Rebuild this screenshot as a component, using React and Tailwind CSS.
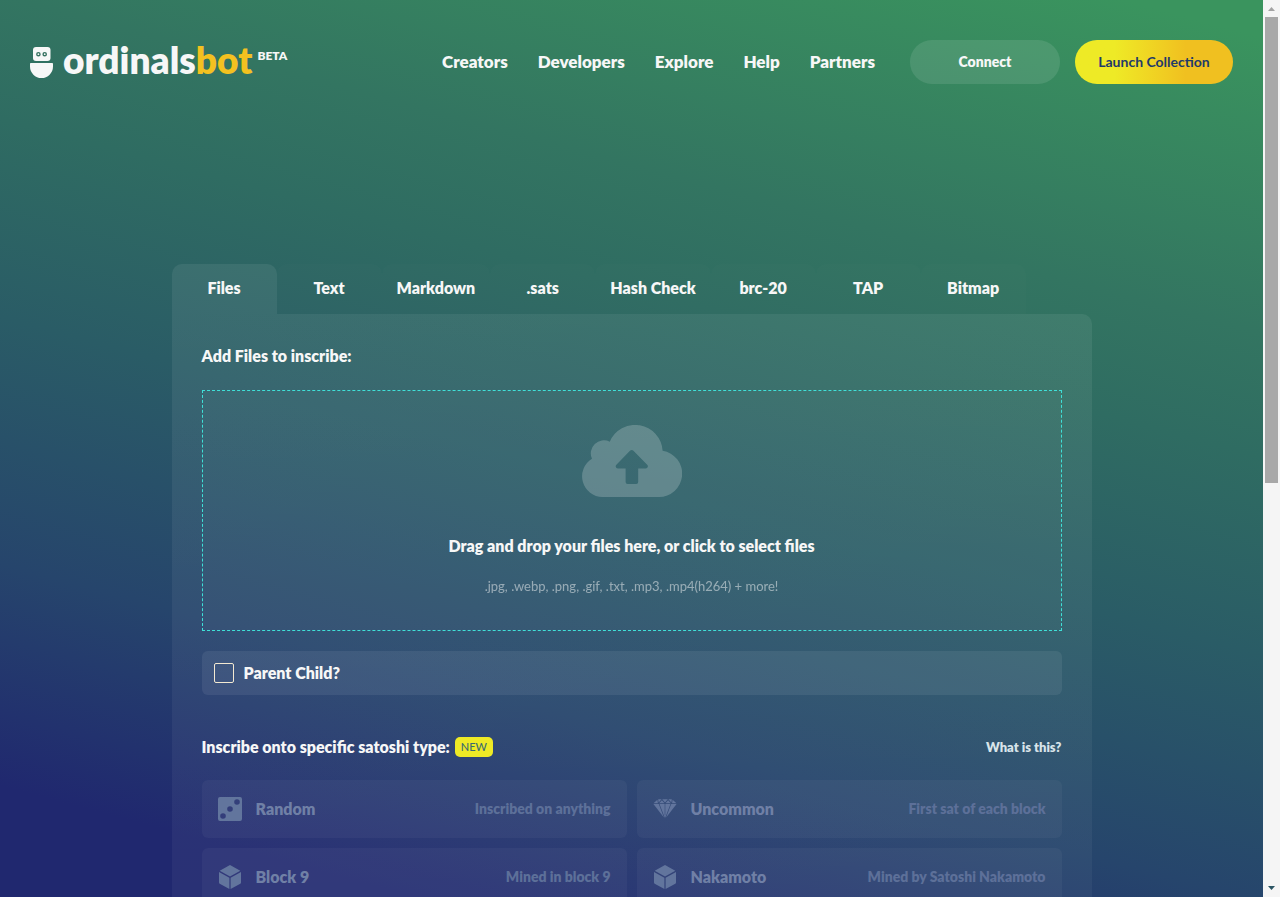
import React, { useState } from 'react';

const navLinks = ['Creators', 'Developers', 'Explore', 'Help', 'Partners'];

const tabs = ['Files', 'Text', 'Markdown', '.sats', 'Hash Check', 'brc-20', 'TAP', 'Bitmap'];

const satTypes = [
  { id: 'random', name: 'Random', description: 'Inscribed on anything', icon: 'dice' },
  { id: 'uncommon', name: 'Uncommon', description: 'First sat of each block', icon: 'gem' },
  { id: 'block9', name: 'Block 9', description: 'Mined in block 9', icon: 'cube' },
  { id: 'nakamoto', name: 'Nakamoto', description: 'Mined by Satoshi Nakamoto', icon: 'cube' }
];

const RobotIcon = () => (
  <svg width="23" height="31" viewBox="0 0 23 31" fill="none" aria-hidden="true">
    <rect x="3" y="0" width="17.5" height="14" rx="3" fill="#f7f7f7" />
    <circle cx="8.4" cy="7.2" r="1.6" stroke="#35705f" strokeWidth="1.4" />
    <circle cx="14.7" cy="7.2" r="1.6" stroke="#35705f" strokeWidth="1.4" />
    <path d="M0.8 16h21.4a.8.8 0 0 1 .8.8v2.7a11.5 11.5 0 0 1-23 0v-2.7a.8.8 0 0 1 .8-.8z" fill="#f7f7f7" />
  </svg>
);

const CloudIcon = () => (
  <svg width="100" height="72" viewBox="0 0 100 72" aria-hidden="true">
    <mask id="cloud-arrow">
      <rect width="100" height="72" fill="white" />
      <path
        d="M48.2 25.6a2.2 2.2 0 0 1 3 0l14 14.2c1.4 1.5.6 3.6-1.4 3.6H56.2V57a2 2 0 0 1-2 2h-8.6a2 2 0 0 1-2-2V43.4h-7.8c-2 0-2.8-2.1-1.4-3.6z"
        fill="black"
      />
    </mask>
    <g mask="url(#cloud-arrow)" fill="white" opacity="0.2">
      <path d="M20.5 72A20.6 20.6 0 0 1 10 33.8A13 13 0 0 1 27.8 16.8A27.5 27.5 0 0 1 80.6 25.7A23.3 23.3 0 0 1 76.7 72z" />
    </g>
  </svg>
);

const DiceIcon = () => (
  <svg width="24" height="24" viewBox="0 0 24 24" fill="currentColor" aria-hidden="true">
    <path
      fillRule="evenodd"
      d="M2 0h20a2 2 0 0 1 2 2v20a2 2 0 0 1-2 2H2a2 2 0 0 1-2-2V2a2 2 0 0 1 2-2zM19 2.200a2.800 2.800 0 1 0 0 5.600a2.800 2.800 0 0 0 0-5.600zM12 9.200a2.800 2.800 0 1 0 0 5.600a2.800 2.800 0 0 0 0-5.600zM5 16.200a2.800 2.800 0 1 0 0 5.600a2.800 2.800 0 0 0 0-5.600z"
    />
  </svg>
);

const GemIcon = () => (
  <svg width="24" height="24" viewBox="0 0 24 24" fill="currentColor" aria-hidden="true">
    <path d="M5.2 2.200L8.600 2.200L5.600 5.400zM9.200 2.200H14.800L12 5.500zM15.400 2.200H18.800L18.400 5.400zM4.400 2.700L4.900 6.200H.5zM19.600 2.700L23.500 6.200H19.100zM8.900 3.200L11.500 6.200H6.100zM15.100 3.200L17.900 6.200H12.500z" />
    <path d="M.4 6.900H5.800L10.900 20.400zM6.500 6.900H11.700V20.600zM12.300 6.900H17.500L12.300 20.600zM18.200 6.900H23.600L13.100 20.400zM11.500 18L12 21.700L12.500 18z" />
  </svg>
);

const CubeIcon = () => (
  <svg width="24" height="24" viewBox="0 0 24 24" fill="currentColor" aria-hidden="true">
    <path d="M12 0L22.3 5.700L12 11.400L1.700 5.700z" />
    <path d="M1 7L11.400 12.800V24L1.700 18.700a1.400 1.400 0 0 1-.7-1.200zM23 7L12.600 12.800V24L22.300 18.700a1.400 1.400 0 0 0 .7-1.200z" />
  </svg>
);

const getIcon = (icon) => {
  const icons = {
    dice: <DiceIcon />,
    gem: <GemIcon />,
    cube: <CubeIcon />
  };
  return icons[icon];
};

const Header = () => (
  <header className="flex items-center justify-between gap-8 px-[30px] pt-10">
    <a href="#" className="flex items-center gap-[10px]">
      <RobotIcon />
      <span className="flex items-start pb-1">
        <span className="text-[37px] leading-9 font-extrabold">
          ordinals<span className="text-[#f3c120]">bot</span>
        </span>
        <sup className="top-0 ml-[5px] pt-1.5 text-xs leading-4 font-extrabold">BETA</sup>
      </span>
    </a>

    <div className="flex items-center">
      <nav className="mr-[35px] flex items-center gap-[30px] text-[17px] leading-6 font-extrabold">
        {navLinks.map((link) => (
          <a key={link} href="#" className="hover:opacity-80">{link}</a>
        ))}
      </nav>
      <button className="h-11 w-[150px] rounded-full bg-white/10 text-sm font-extrabold">Connect</button>
      <button className="ml-[15px] h-11 w-[158px] rounded-full bg-linear-to-r from-[#eeea26] from-25% to-[#f0c020] to-70% text-sm font-bold text-[#1f3a6a]">
        Launch Collection
      </button>
    </div>
  </header>
);

const ScrollTrack = () => (
  <div className="flex w-[17px] shrink-0 flex-col items-center bg-[#f5f5f5]" aria-hidden="true">
    <svg width="17" height="17" viewBox="0 0 17 17" fill="#a3a3a3" className="shrink-0">
      <path d="M5 11h7L8.5 7z" />
    </svg>
    <div className="h-[52%] w-[13px] bg-[#a8a8a8]" />
    <svg width="17" height="17" viewBox="0 0 17 17" fill="#2b5563" className="mt-auto shrink-0">
      <path d="M5 6h7L8.5 10z" />
    </svg>
  </div>
);

const App = () => {
  const [activeTab, setActiveTab] = useState('Files');
  const [parentChild, setParentChild] = useState(false);

  return (
    <div className="flex h-screen font-['Lato',sans-serif] text-[#f7f7f7]">
      <div className="min-w-0 flex-1 overflow-y-auto bg-[linear-gradient(15deg,#20286f_9%,#26456c_27%,#2a5c66_47%,#2f6c62_63%,#337561_73%,#3a945e_97%)] [scrollbar-width:none]">
        <Header />

        <main className="mx-auto mt-[180px] max-w-[920px]">
          {/* Tabs */}
          <div role="tablist" className="flex">
            {tabs.map((tab) => (
              <button
                key={tab}
                role="tab"
                aria-selected={activeTab === tab}
                onClick={() => setActiveTab(tab)}
                className={`h-[50px] min-w-[105px] rounded-t-[10px] px-[15px] pb-0.5 text-base font-extrabold ${activeTab === tab ? 'bg-white/7' : 'bg-white/1'}`}
              >
                {tab}
              </button>
            ))}
          </div>

          <div className="rounded-b-[10px] rounded-tr-[10px] bg-linear-to-b from-white/7 to-white/4 p-[30px]">
            <h2 className="text-base leading-6 font-extrabold">Add Files to inscribe:</h2>

            <button className="mt-[22px] flex w-full flex-col items-center border border-dashed border-[#3fe0d8] bg-white/2 pt-[34px] pb-8">
              <CloudIcon />
              <span className="mt-[37px] text-base leading-6 font-extrabold">
                Drag and drop your files here, or click to select files
              </span>
              <span className="mt-4 text-[13px] leading-6 opacity-50">
                .jpg, .webp, .png, .gif, .txt, .mp3, .mp4(h264) + more!
              </span>
            </button>

            <label className="mt-5 flex h-11 items-center gap-[10px] rounded-md bg-white/7 px-3 text-base font-extrabold">
              <input
                type="checkbox"
                checked={parentChild}
                onChange={(e) => setParentChild(e.target.checked)}
                className="size-5 appearance-none rounded-xs border border-[#f3e9d2] checked:bg-[#eeea26]"
              />
              Parent Child?
            </label>

            <div className="mt-10 flex items-center justify-between">
              <h2 className="flex items-center gap-[5px] text-base leading-6 font-extrabold">
                Inscribe onto specific satoshi type:
                <span className="rounded-[5px] bg-[#eeea26] px-1.5 text-[11px] leading-5 font-medium text-[#3a6a70]">NEW</span>
              </h2>
              <a href="#" className="text-[13px] leading-6 font-extrabold text-[#d8e4ea]">What is this?</a>
            </div>

            {/* Satoshi types */}
            <div className="mt-[21px] grid grid-cols-2 gap-[10px]">
              {satTypes.map((sat) => (
                <button
                  key={sat.id}
                  className="flex h-[58px] items-center rounded-md bg-white/4 px-4 font-extrabold text-[#7080a6]"
                >
                  <span className="text-[#62759d]">{getIcon(sat.icon)}</span>
                  <span className="ml-[14px] text-base">{sat.name}</span>
                  <span className="ml-auto text-sm text-[#5d7099]">{sat.description}</span>
                </button>
              ))}
            </div>
          </div>
        </main>
      </div>

      <ScrollTrack />
    </div>
  );
};

export default App;
